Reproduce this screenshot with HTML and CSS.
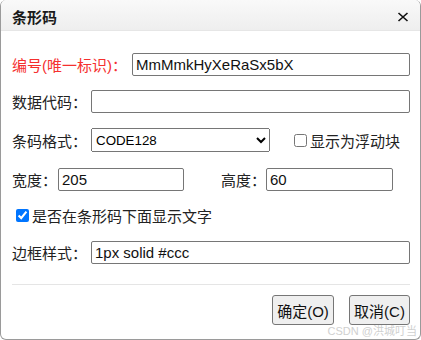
FILE: index.html
```
<!DOCTYPE html>
<html lang="zh">
<head>
<meta charset="utf-8">
<title>条形码</title>
<link rel="stylesheet" href="styles.css">
</head>
<body>
<div class="dialog">
  <div class="titlebar">
    <span class="title">条形码</span>
    <svg class="close" width="12" height="10" viewBox="0 0 12 10"><path d="M1.5 1 L10.5 9 M10.5 1 L1.5 9" stroke="#111" stroke-width="1.6" fill="none"/></svg>
  </div>
  <div class="content">
    <div class="row r1">
      <span class="label red w-id">编号(唯一标识)：</span>
      <input class="field w-full1" type="text" value="MmMmkHyXeRaSx5bX">
    </div>
    <div class="row r2">
      <span class="label w-std">数据代码：</span>
      <input class="field w-full" type="text" value="">
    </div>
    <div class="row r3">
      <span class="label w-std">条码格式：</span>
      <select class="sel"><option>CODE128</option></select>
      <label class="float"><input type="checkbox">显示为浮动块</label>
    </div>
    <div class="row r4">
      <span class="label w-short">宽度：</span>
      <input class="field w-num" type="text" value="205">
      <span class="label w-short gap-h">高度：</span>
      <input class="field w-num" type="text" value="60">
    </div>
    <div class="row r5">
      <label class="check"><input type="checkbox" checked>是否在条形码下面显示文字</label>
    </div>
    <div class="row r6">
      <span class="label w-std">边框样式：</span>
      <input class="field w-full" type="text" value="1px solid #ccc">
    </div>
    <div class="sep"></div>
    <div class="buttons">
      <button class="btn">确定(O)</button>
      <button class="btn btn-cancel">取消(C)</button>
    </div>
  </div>
  <div class="watermark">CSDN @洪城叮当</div>
</div>
</body>
</html>
```
FILE: styles.css
```
html, body {
  margin: 0;
  padding: 0;
  background: #ffffff;
}
body {
  font-family: "Liberation Sans", "Noto Sans CJK SC", sans-serif;
  font-size: 15px;
  color: #222;
}
.dialog {
  position: relative;
  width: 421px;
  height: 340px;
  box-sizing: border-box;
  border: 1px solid #9a9a9a;
  border-top: none;
  border-radius: 6px;
  overflow: hidden;
  background: #fff;
}
.titlebar {
  height: 31px;
  box-sizing: border-box;
  display: flex;
  align-items: center;
  justify-content: space-between;
  padding: 0 11px 0 11px;
  background: linear-gradient(#f9f9f9, #eeeeee);
  border-bottom: 1px solid #e6e6e6;
}
.title {
  font-weight: bold;
  font-size: 15px;
  color: #1a1a1a;
  margin-top: 2px;
}
.close {
  display: block;
  margin-top: 4px;
}
.content {
  padding: 21px 10px 0 11px;
}
.row {
  display: flex;
  align-items: center;
  height: 24px;
}
.r2 { margin-top: 13px; }
.r3 { margin-top: 15px; }
.r4 { margin-top: 15px; }
.r5 { margin-top: 12px; }
.r6 { margin-top: 13px; }
.label {
  flex: none;
  white-space: nowrap;
}
.red { color: #f5302e; }
.w-id { width: 120px; }
.w-std { width: 79px; }
.w-short { width: 46px; }
.gap-h { margin-left: 37px; width: 45px; }
.field {
  flex: none;
  height: 23px;
  box-sizing: border-box;
  margin: 0;
  padding: 1px 3px;
  border: 1px solid #767676;
  border-radius: 2px;
  font-family: "Liberation Sans", "Noto Sans CJK SC", sans-serif;
  font-size: 15px;
  color: #111;
}
.w-full1 { width: 278px; }
.w-full { width: 319px; }
.w-num { width: 126px; }
.gap-h + .w-num { width: 127px; }
.sel {
  flex: none;
  width: 179px;
  height: 24px;
  margin: 0;
  font-family: "Liberation Sans", sans-serif;
  font-size: 13.33px;
}
.float {
  display: flex;
  align-items: center;
  margin-left: 20px;
  white-space: nowrap;
}
.float input, .check input {
  margin: 0 3px 0 4px;
  width: 13px;
  height: 13px;
}
.check {
  display: flex;
  align-items: center;
  white-space: nowrap;
}
.sep {
  height: 1px;
  background: #e5e5e5;
  margin-top: 20px;
}
.buttons {
  display: flex;
  justify-content: flex-end;
  gap: 15px;
  margin-top: 10px;
}
.btn {
  width: 62px;
  height: 30px;
  padding: 0;
  margin: 0;
  font-family: "Liberation Sans", "Noto Sans CJK SC", sans-serif;
  font-size: 15px;
  color: #111;
  background: #efefef;
  border: 1px solid #767676;
  border-radius: 3px;
}
.btn-cancel { width: 61px; }
.watermark {
  position: absolute;
  right: 3px;
  bottom: 1px;
  font-size: 11px;
  color: #d0d0d0;
  white-space: nowrap;
}
```
